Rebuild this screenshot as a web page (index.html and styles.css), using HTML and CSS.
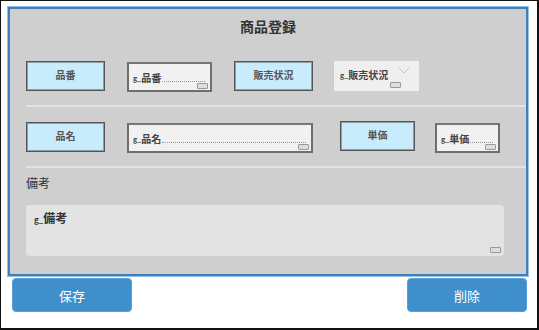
FILE: index.html
```html
<!DOCTYPE html>
<html lang="ja">
<head>
    <meta charset="UTF-8">
    <title>商品登録</title>
    <link rel="stylesheet" href="styles.css">
</head>
<body>
    <div class="frame">
        <div class="panel">
            <div class="title">商品登録</div>

            <div class="row row-1">
                <div class="label">品番</div>
                <div class="field field-code">
                    <span class="pre">g_</span><span class="val">品番</span><span class="dots"></span>
                    <span class="grip"></span>
                </div>
                <div class="label">販売状況</div>
                <div class="select">
                    <span class="pre">g_</span><span class="val">販売状況</span>
                    <svg class="chevron" width="12" height="7" viewBox="0 0 12 7"><path d="M1 1 L6 6 L11 1" fill="none" stroke="#c4c4c4" stroke-width="1"/></svg>
                    <span class="grip"></span>
                </div>
            </div>

            <div class="sep"></div>

            <div class="row row-2">
                <div class="label">品名</div>
                <div class="field field-name">
                    <span class="pre">g_</span><span class="val">品名</span><span class="dots"></span>
                    <span class="grip"></span>
                </div>
                <div class="label label-price">単価</div>
                <div class="field field-price">
                    <span class="pre">g_</span><span class="val">単価</span><span class="dots"></span>
                    <span class="grip"></span>
                </div>
            </div>

            <div class="sep"></div>

            <div class="note-label">備考</div>
            <div class="memo">
                <span class="pre">g_</span><span class="val">備考</span>
                <span class="grip"></span>
            </div>
        </div>

        <div class="actions">
            <button class="btn">保存</button>
            <button class="btn">削除</button>
        </div>
    </div>
</body>
</html>
```

FILE: styles.css
```css
body {
    margin: 0;
    padding: 0;
    background: #ffffff;
    font-family: "Noto Sans CJK JP", "Noto Sans", sans-serif;
    color: #333;
}

.frame {
    box-sizing: border-box;
    width: 539px;
    height: 330px;
    border: 1px solid #111;
    border-right-width: 2px;
    border-bottom-width: 2px;
    padding: 6px 0 0 7px;
}

.panel {
    box-sizing: border-box;
    width: 520px;
    height: 269px;
    background: #cfcfcf;
    border: 2px solid #3e7fbd;
    box-shadow: 0 0 0 1px #9cc0e0;
    padding: 0 0 0 16px;
}

.title {
    height: 34px;
    line-height: 34px;
    text-align: center;
    font-size: 14px;
    font-weight: bold;
    color: #333;
    margin-left: -16px;
}

.row {
    display: flex;
    align-items: flex-start;
    height: 31px;
}

.row-1 {
    margin-top: 18px;
    gap: 22px;
}

.row-2 {
    margin-top: 15px;
}

.label {
    box-sizing: border-box;
    width: 79px;
    height: 30px;
    background: #c9ecfc;
    border: 1px solid #555;
    box-shadow: inset 0 0 0 1px #8aa0a8;
    font-size: 10px;
    font-weight: bold;
    line-height: 26px;
    text-align: center;
    color: #555;
}

.field {
    position: relative;
    box-sizing: border-box;
    height: 30px;
    background: #f1f1f1;
    border: 2px solid #6e6e6e;
    border-top-color: #777;
    display: flex;
    align-items: center;
    padding: 0 5px 0 4px;
    font-size: 10px;
    font-weight: bold;
    color: #444;
    margin-top: 1px;
}

.field-code {
    width: 85px;
}

.field-name {
    width: 186px;
    margin-left: 22px;
}

.label-price {
    width: 75px;
    margin-left: 27px;
    margin-top: -1px;
}

.field-price {
    width: 65px;
    margin-left: 20px;
}

.pre {
    font-size: 7px;
    align-self: center;
    margin-top: 2px;
}

.val {
    white-space: nowrap;
}

.dots {
    flex: 1;
    height: 8px;
    border-bottom: 1px dotted #999;
    margin-left: 1px;
}

.grip {
    position: absolute;
    right: 2px;
    bottom: 1px;
    width: 9px;
    height: 4px;
    border: 1px solid #9a9a9a;
    border-radius: 1px;
    background: #dedede;
}

.select {
    position: relative;
    box-sizing: border-box;
    width: 85px;
    height: 30px;
    margin-left: -1px;
    background: #efefef;
    display: flex;
    align-items: center;
    padding: 0 0 4px 6px;
    font-size: 10px;
    font-weight: bold;
    color: #444;
}

.select .chevron {
    position: absolute;
    right: 9px;
    top: 6px;
}

.select .grip {
    right: 18px;
    bottom: 3px;
}

.sep {
    height: 2px;
    background: #e2e2e2;
    margin-top: 13px;
}

.note-label {
    height: 30px;
    line-height: 30px;
    font-size: 12px;
    color: #333;
}

.memo {
    position: relative;
    box-sizing: border-box;
    width: 478px;
    height: 51px;
    margin-top: 7px;
    background: #e3e3e3;
    border-radius: 4px;
    padding: 4px 0 0 8px;
    font-size: 12px;
    font-weight: bold;
    color: #333;
}

.memo .pre {
    font-size: 8px;
}

.memo .grip {
    right: 3px;
    bottom: 3px;
}

.actions {
    display: flex;
    justify-content: space-between;
    width: 515px;
    margin: 2px 0 0 4px;
}

.btn {
    width: 120px;
    height: 34px;
    background: #3e8fcb;
    border: 1px solid #5aa0d4;
    border-radius: 4px;
    color: #fff;
    font-family: "Noto Sans CJK JP", sans-serif;
    font-size: 13px;
    padding: 0;
}
```
